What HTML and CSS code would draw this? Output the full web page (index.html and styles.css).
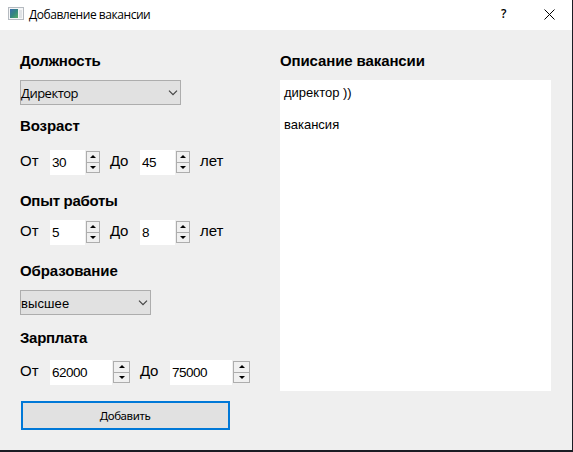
FILE: index.html
```html
<!DOCTYPE html>
<html lang="ru">
<head>
<meta charset="utf-8">
<title>Добавление вакансии</title>
<link rel="stylesheet" href="styles.css">
</head>
<body>
<div class="window">
  <header class="titlebar">
    <svg class="app-icon" width="16" height="14" viewBox="0 0 16 14" shape-rendering="crispEdges">
      <defs><linearGradient id="pic" x1="0" y1="0" x2="1" y2="1"><stop offset="0" stop-color="#3b6cae"/><stop offset=".5" stop-color="#338580"/><stop offset="1" stop-color="#55ac65"/></linearGradient></defs>
      <rect x=".5" y=".5" width="15" height="12" fill="#f5f6f7" stroke="#b5bac0"/>
      <rect x="2" y="2" width="8" height="9" fill="url(#pic)"/>
      <rect x="11" y="3" width="3" height="8" fill="#dfe2e5"/>
    </svg>
    <h1 class="title">Добавление вакансии</h1>
    <span class="help">?</span>
    <svg class="close" width="11" height="11" viewBox="0 0 11 11"><path d="M.5.5l10 10M10.500.5l-10 10" stroke="#000" stroke-width="1" fill="none"/></svg>
  </header>
  <main class="content">
    <form class="fields">
      <h2 class="label position-label">Должность</h2>
      <div class="combo combo-position"><span>Директор</span><svg width="10" height="6" viewBox="0 0 10 6"><path d="M1 .7l4 4 4-4" fill="none" stroke="#444" stroke-width="1.2"/></svg></div>
      <h2 class="label age-label">Возраст</h2>
      <div class="row">
        <span class="from">От</span>
        <div class="spin"><span class="value">30</span><span class="steps"><i class="up"></i><i class="down"></i></span></div>
        <span class="to">До</span>
        <div class="spin"><span class="value">45</span><span class="steps"><i class="up"></i><i class="down"></i></span></div>
        <span class="unit">лет</span>
      </div>
      <h2 class="label exp-label">Опыт работы</h2>
      <div class="row">
        <span class="from">От</span>
        <div class="spin"><span class="value">5</span><span class="steps"><i class="up"></i><i class="down"></i></span></div>
        <span class="to">До</span>
        <div class="spin"><span class="value">8</span><span class="steps"><i class="up"></i><i class="down"></i></span></div>
        <span class="unit">лет</span>
      </div>
      <h2 class="label edu-label">Образование</h2>
      <div class="combo combo-education"><span>высшее</span><svg width="10" height="6" viewBox="0 0 10 6"><path d="M1 .7l4 4 4-4" fill="none" stroke="#444" stroke-width="1.2"/></svg></div>
      <h2 class="label pay-label">Зарплата</h2>
      <div class="row">
        <span class="from">От</span>
        <div class="spin wide"><span class="value">62000</span><span class="steps"><i class="up"></i><i class="down"></i></span></div>
        <span class="to">До</span>
        <div class="spin wide"><span class="value">75000</span><span class="steps"><i class="up"></i><i class="down"></i></span></div>
      </div>
      <button class="submit" type="button"><span>Добавить</span></button>
    </form>
    <section class="description">
      <h2 class="label desc-label">Описание вакансии</h2>
      <div class="textbox"><p>директор ))</p><p>вакансия</p></div>
    </section>
  </main>
</div>
</body>
</html>
```
FILE: styles.css
```css
* { box-sizing: border-box; }
body { margin: 0; background: #1b1d24; color: #000; font-family: "Liberation Sans", sans-serif; }
h1, h2, p { margin: 0; }
.window { width: 572px; height: 450px; background: #efefef; }
.titlebar { display: flex; align-items: center; height: 30px; padding-left: 8px; background: #fff; }
.app-icon { flex: none; margin-top: -2px; }
.title { width: 477px; padding-left: 5px; font: 400 12px/16px "Open Sans", sans-serif; letter-spacing: -.45px; }
.help { width: 10px; margin-top: -2px; font: 600 12px/16px "Open Sans", sans-serif; }
.close { margin-left: 33px; margin-top: -2px; flex: none; }
.content { display: flex; padding: 21px 0 0 20px; }
.fields { width: 260px; }
.label { height: 20px; font: bold 15px/20px "Liberation Sans", sans-serif; letter-spacing: -.11px; }
.position-label { letter-spacing: -.25px; }
.position-label, .exp-label, .edu-label, .desc-label { margin-bottom: 9px; }
.age-label { margin: 11px 0 14px; }
.exp-label, .edu-label { margin-top: 16px; }
.exp-label { letter-spacing: -.3px; }
.pay-label { margin: 13px 0 12px; letter-spacing: -.3px; }
.combo { display: flex; align-items: center; justify-content: space-between; height: 25px; padding: 0 2px 0 0; border: 1px solid #adadad; background: #e1e1e1; font: 13px/16px "Open Sans", sans-serif; }
.combo-position { width: 161px; letter-spacing: -.5px; }
.combo-education { width: 131px; padding: 2px 2px 0 0; font: 13px/16px "Liberation Sans", sans-serif; letter-spacing: .1px; }
.combo-education svg { margin-top: -2px; }
.row { display: flex; height: 25px; font-size: 15px; line-height: 22px; }
.from { width: 30px; }
.to { flex: none; width: 40px; padding-left: 10px; letter-spacing: -.3px; }
.unit { padding-left: 10px; }
.spin { display: flex; width: 50px; height: 25px; }
.spin.wide { width: 80px; }
.value { width: 35px; margin-right: 1px; padding: 2px 0 0 2px; background: #fff; font: 13.5px/22px "Liberation Sans", sans-serif; letter-spacing: -.5px; }
.wide .value { width: 62px; }
.steps { display: flex; flex-direction: column; width: 14px; height: 22px; margin-top: 1px; border: 1px solid #adadad; background: #f0f0f0; }
.wide .steps { width: 17px; }
.steps i { flex: 1; display: flex; align-items: center; justify-content: center; }
.steps i + i { border-top: 1px solid #adadad; }
.steps i::after { content: ""; border: 3px solid transparent; }
.steps .up::after { border-top: 0; border-bottom-color: #000; }
.steps .down::after { border-bottom: 0; border-top-color: #000; }
.submit { display: block; width: 209px; height: 29px; margin: 16px 0 0 1px; padding: 1px 1px 0 0; border: 2px solid #0078d7; background: #e1e1e1; color: #000; font: 11.5px/16px "Noto Sans", sans-serif; letter-spacing: -.4px; }
.description { width: 271px; }
.textbox { height: 311px; padding: 5px 4px; background: #fff; font: 13px/16px "Liberation Sans", sans-serif; }
.textbox p + p { margin-top: 16px; }
```
